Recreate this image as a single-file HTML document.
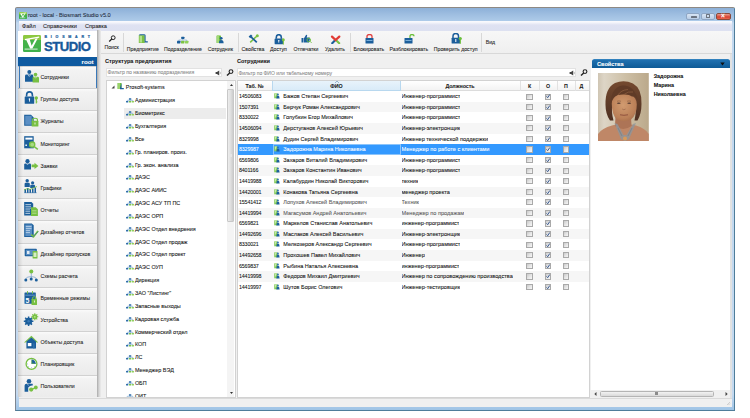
<!DOCTYPE html><html><head><meta charset="utf-8"><style>
*{box-sizing:border-box;margin:0;padding:0}
html,body{width:750px;height:418px;overflow:hidden;background:#fff;font-family:"Liberation Sans",sans-serif;color:#222}
.ab{position:absolute}
.t{position:absolute;white-space:nowrap;line-height:1;-webkit-text-stroke:0.07px currentColor}
</style></head><body>
<div class="ab" style="left:15px;top:7px;width:720px;height:404px;border:1px solid #7d8590;border-top-color:#8e8984;border-right-color:#4f7d9a;border-bottom-color:#4f7d9a;border-radius:2px 2px 0 0;background:linear-gradient(#8db0d8 0px,#9dbde0 6px,#aecbe9 13px,#c2d8ef 15px,#c4d9ef 100%)"></div><div class="ab" style="left:16px;top:395px;width:718px;height:15px;background:linear-gradient(#c2d8ef,#9fc4e6)"></div><div class="ab" style="left:19px;top:12px;width:8px;height:7px;background:linear-gradient(#9ad450 0,#8dc840 35%,#46b34a 36%,#3fb04c);border-radius:0.8px"></div><svg class="ab" style="left:19px;top:12px" width="8" height="7" viewBox="0 0 18 17"><path d="M1.9 4.6 Q9 3.6 16.2 2.2" stroke="#fff" stroke-width="1.6" fill="none"/><path d="M3 4.4 L7.2 13.4 L9.4 13.4 L14.8 3.3 L12.4 3.7 L8.6 10.8 L6.6 4.1Z" fill="#fff"/><path d="M1.6 14.1 H14.6" stroke="#fff" stroke-width="1.2"/></svg><div class="t" style="left:28px;top:13.1px;font-size:5.6px;color:#1e2a3a">root - local - Biosmart Studio v5.0</div><div class="ab" style="left:686px;top:12.5px;width:14px;height:7px;border:1px solid #8ea6c4;border-radius:2px;background:linear-gradient(#d8e5f4,#b9cde6)"></div><div class="ab" style="left:690.5px;top:15.5px;width:6px;height:2px;background:#f4f6fa;border:0.5px solid #6a7380;border-radius:0.5px"></div><div class="ab" style="left:701px;top:12.5px;width:14px;height:7px;border:1px solid #8ea6c4;border-radius:2px;background:linear-gradient(#d8e5f4,#b9cde6)"></div><div class="ab" style="left:705.8px;top:14.3px;width:4.5px;height:3.6px;border:1px solid #6d7580;border-radius:0.6px"></div><div class="ab" style="left:716px;top:12.5px;width:15px;height:7px;border:1px solid #8a4a3a;border-radius:2px;background:linear-gradient(#e8a090,#d84030 60%,#e86a50)"></div><div class="t" style="left:721px;top:12.5px;font-size:6.5px;font-weight:bold;color:#fff">×</div><div class="ab" style="left:19px;top:21px;width:713px;height:386px;background:#f0f0f0"></div><div class="ab" style="left:730.3px;top:30px;width:1.7px;height:377px;background:#e2e2e2"></div><div class="ab" style="left:19px;top:21px;width:713px;height:9.6px;background:linear-gradient(#fbfbfd 0,#f4f5fb 1.5px,#dfe2f2 4px,#dde1f1 100%)"></div><div class="t" style="left:22px;top:23.9px;font-size:5.6px;color:#1a1a1a">Файл</div><div class="t" style="left:43px;top:23.9px;font-size:5.6px;color:#1a1a1a">Справочники</div><div class="t" style="left:85px;top:23.9px;font-size:5.6px;color:#1a1a1a">Справка</div><div class="ab" style="left:18px;top:30.6px;width:79px;height:26.4px;background:#fff"></div><div class="ab" style="left:22.9px;top:35.4px;width:18.1px;height:17px;background:linear-gradient(#8dc840 0,#8dc840 30%,#46b34a 31%,#3fb04c 100%);border-radius:1.2px"></div><svg class="ab" style="left:22.9px;top:35.4px" width="18" height="17" viewBox="0 0 18 17"><path d="M1.9 4.6 Q9 3.6 16.2 2.2" stroke="#fff" stroke-width="1.3" fill="none"/><path d="M3 4.4 L7.2 13.4 L9.4 13.4 L14.8 3.3 L12.4 3.7 L8.6 10.8 L6.6 4.1Z" fill="#fff"/><path d="M1.6 14.1 H14.6" stroke="#fff" stroke-width="0.8"/></svg><div class="t" style="left:44.5px;top:35.9px;font-size:3.6px;font-weight:bold;color:#1b5e9b;letter-spacing:3.75px;-webkit-text-stroke:0.2px #1b5e9b">BIOSMART</div><div class="t" style="left:44px;top:40.2px;font-size:13.4px;font-weight:bold;color:#17589a;letter-spacing:-0.55px;transform:scaleX(0.985);transform-origin:0 0;-webkit-text-stroke:0.35px #17589a">STUDIO</div><div class="ab" style="left:18px;top:57px;width:79px;height:9px;background:#0f5aa0"></div><div class="t" style="left:81.6px;top:58.8px;font-size:6.2px;font-weight:bold;color:#fff">root</div><div class="ab" style="left:17.7px;top:66.00px;width:79.3px;height:22.07px;background:linear-gradient(#cfcfcf 0,#d2d2d2 0.7px,#f9f9f9 1.5px,#f3f3f3 4px,#ebebeb 100%)"></div><div class="t" style="left:40.5px;top:75.30px;font-size:5.25px;color:#1a1a1a">Сотрудники</div><div class="ab" style="left:17.7px;top:88.07px;width:79.3px;height:22.07px;background:linear-gradient(#cfcfcf 0,#d2d2d2 0.7px,#f9f9f9 1.5px,#f3f3f3 4px,#ebebeb 100%)"></div><div class="t" style="left:40.5px;top:97.37px;font-size:5.25px;color:#1a1a1a">Группы доступа</div><div class="ab" style="left:17.7px;top:110.14px;width:79.3px;height:22.07px;background:linear-gradient(#cfcfcf 0,#d2d2d2 0.7px,#f9f9f9 1.5px,#f3f3f3 4px,#ebebeb 100%)"></div><div class="t" style="left:40.5px;top:119.44px;font-size:5.25px;color:#1a1a1a">Журналы</div><div class="ab" style="left:17.7px;top:132.21px;width:79.3px;height:22.07px;background:linear-gradient(#cfcfcf 0,#d2d2d2 0.7px,#f9f9f9 1.5px,#f3f3f3 4px,#ebebeb 100%)"></div><div class="t" style="left:40.5px;top:141.51px;font-size:5.25px;color:#1a1a1a">Мониторинг</div><div class="ab" style="left:17.7px;top:154.28px;width:79.3px;height:22.07px;background:linear-gradient(#cfcfcf 0,#d2d2d2 0.7px,#f9f9f9 1.5px,#f3f3f3 4px,#ebebeb 100%)"></div><div class="t" style="left:40.5px;top:163.58px;font-size:5.25px;color:#1a1a1a">Заявки</div><div class="ab" style="left:17.7px;top:176.35px;width:79.3px;height:22.07px;background:linear-gradient(#cfcfcf 0,#d2d2d2 0.7px,#f9f9f9 1.5px,#f3f3f3 4px,#ebebeb 100%)"></div><div class="t" style="left:40.5px;top:185.65px;font-size:5.25px;color:#1a1a1a">Графики</div><div class="ab" style="left:17.7px;top:198.42px;width:79.3px;height:22.07px;background:linear-gradient(#cfcfcf 0,#d2d2d2 0.7px,#f9f9f9 1.5px,#f3f3f3 4px,#ebebeb 100%)"></div><div class="t" style="left:40.5px;top:207.72px;font-size:5.25px;color:#1a1a1a">Отчеты</div><div class="ab" style="left:17.7px;top:220.49px;width:79.3px;height:22.07px;background:linear-gradient(#cfcfcf 0,#d2d2d2 0.7px,#f9f9f9 1.5px,#f3f3f3 4px,#ebebeb 100%)"></div><div class="t" style="left:40.5px;top:229.79px;font-size:5.25px;color:#1a1a1a">Дизайнер отчетов</div><div class="ab" style="left:17.7px;top:242.56px;width:79.3px;height:22.07px;background:linear-gradient(#cfcfcf 0,#d2d2d2 0.7px,#f9f9f9 1.5px,#f3f3f3 4px,#ebebeb 100%)"></div><div class="t" style="left:40.5px;top:251.86px;font-size:5.25px;color:#1a1a1a">Дизайнер пропусков</div><div class="ab" style="left:17.7px;top:264.63px;width:79.3px;height:22.07px;background:linear-gradient(#cfcfcf 0,#d2d2d2 0.7px,#f9f9f9 1.5px,#f3f3f3 4px,#ebebeb 100%)"></div><div class="t" style="left:40.5px;top:273.93px;font-size:5.25px;color:#1a1a1a">Схемы расчета</div><div class="ab" style="left:17.7px;top:286.70px;width:79.3px;height:22.07px;background:linear-gradient(#cfcfcf 0,#d2d2d2 0.7px,#f9f9f9 1.5px,#f3f3f3 4px,#ebebeb 100%)"></div><div class="t" style="left:40.5px;top:296.00px;font-size:5.25px;color:#1a1a1a">Временные режимы</div><div class="ab" style="left:17.7px;top:308.77px;width:79.3px;height:22.07px;background:linear-gradient(#cfcfcf 0,#d2d2d2 0.7px,#f9f9f9 1.5px,#f3f3f3 4px,#ebebeb 100%)"></div><div class="t" style="left:40.5px;top:318.07px;font-size:5.25px;color:#1a1a1a">Устройства</div><div class="ab" style="left:17.7px;top:330.84px;width:79.3px;height:22.07px;background:linear-gradient(#cfcfcf 0,#d2d2d2 0.7px,#f9f9f9 1.5px,#f3f3f3 4px,#ebebeb 100%)"></div><div class="t" style="left:40.5px;top:340.14px;font-size:5.25px;color:#1a1a1a">Объекты доступа</div><div class="ab" style="left:17.7px;top:352.91px;width:79.3px;height:22.07px;background:linear-gradient(#cfcfcf 0,#d2d2d2 0.7px,#f9f9f9 1.5px,#f3f3f3 4px,#ebebeb 100%)"></div><div class="t" style="left:40.5px;top:362.21px;font-size:5.25px;color:#1a1a1a">Планировщик</div><div class="ab" style="left:17.7px;top:374.98px;width:79.3px;height:22.07px;background:linear-gradient(#cfcfcf 0,#d2d2d2 0.7px,#f9f9f9 1.5px,#f3f3f3 4px,#ebebeb 100%)"></div><div class="t" style="left:40.5px;top:384.28px;font-size:5.25px;color:#1a1a1a">Пользователи</div><svg class="ab" style="left:20px;top:66.00px" width="22" height="22" viewBox="0 0 22 22"><circle cx="9.3" cy="5.9" r="2" fill="#1b5e9b"/><path d="M5 15.8 V10 Q5 8.6 6.5 8.6 H12 Q13.3 8.6 13.3 10 V15.8Z" fill="#1b5e9b"/><path d="M7.8 8.6 L9.3 10.4 L10.8 8.6" stroke="#fff" stroke-width="0.6" fill="none"/><circle cx="15.5" cy="8.6" r="1.8" fill="#78c043"/><path d="M12.6 16.6 V12 Q12.6 10.8 14 10.8 H17.6 Q19 10.8 19 12 V16.6Z" fill="#78c043"/><path d="M14.2 10.8 L15.5 12.2 L16.8 10.8" stroke="#fff" stroke-width="0.5" fill="none"/></svg><svg class="ab" style="left:20px;top:88.07px" width="22" height="22" viewBox="0 0 22 22"><path d="M6.6 8.6 V7 Q6.6 3.9 9.5 3.9 Q12.4 3.9 12.4 7 V8.6" stroke="#1b5e9b" stroke-width="1.6" fill="none"/><rect x="4.7" y="8.4" width="9.5" height="7.4" rx="0.6" fill="#1b5e9b"/><circle cx="9.4" cy="11" r="0.8" fill="#fff"/><rect x="9" y="11" width="0.8" height="2.6" fill="#fff"/><circle cx="16.3" cy="10" r="1.7" fill="#78c043"/><rect x="15.7" y="10" width="1.2" height="5.4" fill="#78c043"/><rect x="16.5" y="13.5" width="1" height="0.8" fill="#78c043"/></svg><svg class="ab" style="left:20px;top:110.14px" width="22" height="22" viewBox="0 0 22 22"><path d="M4.2 4.7 H11 L13.7 7.4 V15.8 H4.2Z" fill="#1b5e9b"/><rect x="5.2" y="5.8" width="6.5" height="9" fill="#5b8fc4"/><path d="M12.5 11 V10 Q12.5 8.3 15 8.3 Q17.5 8.3 17.5 10 V11" stroke="#78c043" stroke-width="1.1" fill="none"/><rect x="11.6" y="10.8" width="6.8" height="5.8" rx="0.5" fill="#78c043"/><rect x="14.6" y="12.5" width="0.8" height="2" fill="#fff"/></svg><svg class="ab" style="left:20px;top:132.21px" width="22" height="22" viewBox="0 0 22 22"><rect x="4.2" y="4.2" width="9.5" height="12.1" fill="#1b5e9b"/><rect x="5.4" y="5.6" width="7.1" height="2" fill="#fff"/><rect x="5.4" y="12.5" width="1.5" height="1.5" fill="#fff"/><circle cx="12.2" cy="12.6" r="2.6" stroke="#78c043" stroke-width="1.3" fill="#a9db82"/><path d="M14.2 14.6 L17.8 17.4" stroke="#78c043" stroke-width="1.4"/></svg><svg class="ab" style="left:20px;top:154.28px" width="22" height="22" viewBox="0 0 22 22"><circle cx="7.5" cy="7.2" r="2.1" fill="#1b5e9b"/><path d="M4.2 15.6 V10.6 Q4.2 9.4 5.4 9.4 H9.8 Q11 9.4 11 10.6 V15.6Z" fill="#1b5e9b"/><path d="M6.3 9.4 L7.5 10.8 L8.7 9.4" stroke="#fff" stroke-width="0.5" fill="none"/><path d="M11.6 10.6 H14.5 V8.7 L18.4 11.9 L14.5 15.1 V13.2 H11.6Z" fill="#78c043"/></svg><svg class="ab" style="left:20px;top:176.35px" width="22" height="22" viewBox="0 0 22 22"><circle cx="7.2" cy="4.8" r="1.7" fill="#1b5e9b"/><path d="M4.6 11 V8 Q4.6 6.8 5.8 6.8 H8.6 Q9.8 6.8 9.8 8 V11Z" fill="#1b5e9b"/><circle cx="12.6" cy="6.8" r="1.6" fill="#1b5e9b"/><path d="M10.2 12 V9.8 Q10.2 8.8 11.3 8.8 H14 Q15 8.8 15 9.8 V12Z" fill="#1b5e9b"/><rect x="4.5" y="13" width="1.5" height="3.8" fill="#1b5e9b"/><rect x="7" y="12" width="1.5" height="4.8" fill="#1b5e9b"/><rect x="9.5" y="13" width="1.5" height="3.8" fill="#1b5e9b"/><rect x="12" y="12.5" width="1.5" height="4.3" fill="#1b5e9b"/><rect x="14.5" y="11.5" width="1.5" height="5.3" fill="#1b5e9b"/><path d="M4 14 L7.5 12.5 L10 13.5 L13 12 L17 10.5" stroke="#78c043" stroke-width="0.8" fill="none"/><rect x="4.2" y="16.6" width="12.5" height="0.5" fill="#1b5e9b"/></svg><svg class="ab" style="left:20px;top:198.42px" width="22" height="22" viewBox="0 0 22 22"><path d="M4.2 4 H11.5 L13.2 5.7 V17.6 H4.2Z" fill="#1b5e9b"/><path d="M5.4 6.5 H11 M5.4 8.3 H11 M5.4 10.1 H11 M5.4 11.9 H10 M5.4 13.7 H10 M5.4 15.5 H10" stroke="#fff" stroke-width="0.6"/><path d="M11 9.2 H15.8 L17.9 11.3 V18 H11Z" fill="#78c043"/><path d="M12.2 12.5 H16.5 M12.2 14 H16.5 M12.2 15.5 H16.5" stroke="#c9eaa8" stroke-width="0.5"/></svg><svg class="ab" style="left:20px;top:220.49px" width="22" height="22" viewBox="0 0 22 22"><path d="M4.2 3.4 H11.8 L13.7 5.3 V17.1 H4.2Z" fill="#1b5e9b"/><rect x="5.3" y="4.6" width="6.8" height="11.5" fill="#5b8fc4"/><path d="M5.8 6.6 H11.5 M5.8 8.6 H11.5 M5.8 10.6 H10 M5.8 12.6 H10" stroke="#d8e6f4" stroke-width="0.7"/><path d="M11.3 14.5 L13.6 16.8 L18 11" stroke="#78c043" stroke-width="1.6" fill="none"/><path d="M12 17.5 L18.5 11.5" stroke="#1b5e9b" stroke-width="0.5"/></svg><svg class="ab" style="left:20px;top:242.56px" width="22" height="22" viewBox="0 0 22 22"><rect x="4.7" y="5.8" width="12.1" height="7.4" rx="0.7" fill="#1b5e9b"/><rect x="5.8" y="6.8" width="9.8" height="5.4" fill="#5b8fc4"/><rect x="7" y="8" width="2.5" height="3" fill="#fff" opacity="0.8"/><rect x="12.6" y="8" width="4.9" height="7.5" rx="0.5" fill="#78c043"/><rect x="13.5" y="9.5" width="3" height="4.5" fill="#fff" opacity="0.7"/></svg><svg class="ab" style="left:20px;top:264.63px" width="22" height="22" viewBox="0 0 22 22"><path d="M11.3 8 V11.5 M5.8 14.5 Q5.8 11.7 11.3 11.7 Q16.3 11.7 16.3 14.5 M11.3 11.7 V13.8" stroke="#5b8fc4" stroke-width="0.6" fill="none"/><circle cx="11.3" cy="6.4" r="2" fill="#78c043"/><circle cx="5.8" cy="14.9" r="1.5" fill="#1b5e9b"/><circle cx="11.2" cy="13.9" r="1.5" fill="#1b5e9b"/><circle cx="16.3" cy="14.9" r="1.5" fill="#1b5e9b"/></svg><svg class="ab" style="left:20px;top:286.70px" width="22" height="22" viewBox="0 0 22 22"><rect x="4.5" y="5.6" width="11.3" height="11.2" rx="0.5" fill="#1b5e9b"/><rect x="5.4" y="7.6" width="9.5" height="1.2" fill="#5b8fc4"/><path d="M7.5 4 V6.8 M12.5 4 V6.8" stroke="#78c043" stroke-width="0.9"/><text x="5.6" y="15.6" font-family="Liberation Sans" font-size="7" font-weight="bold" fill="#fff">5</text><path d="M12.5 12 V11.2 Q12.5 9.7 14.3 9.7 Q16 9.7 16 11.2 V12" stroke="#78c043" stroke-width="1" fill="none"/><rect x="11.5" y="11.8" width="5.5" height="6.3" rx="0.5" fill="#78c043"/><rect x="14" y="13.5" width="0.7" height="2" fill="#fff"/></svg><svg class="ab" style="left:20px;top:308.77px" width="22" height="22" viewBox="0 0 22 22"><circle cx="8.6" cy="12.2" r="3.5" fill="#1b5e9b"/><path d="M8.6 7.4 V17 M3.8 12.2 H13.4 M5.2 8.8 L12 15.6 M12 8.8 L5.2 15.6" stroke="#1b5e9b" stroke-width="1.5"/><circle cx="8.6" cy="12.2" r="1.2" fill="#3a7ab8"/><circle cx="14.8" cy="7.8" r="2.5" fill="#78c043"/><path d="M14.8 4.3 V11.3 M11.3 7.8 H18.3 M12.3 5.3 L17.3 10.3 M17.3 5.3 L12.3 10.3" stroke="#78c043" stroke-width="1.1"/><circle cx="14.8" cy="7.8" r="0.9" fill="#b8e492"/></svg><svg class="ab" style="left:20px;top:330.84px" width="22" height="22" viewBox="0 0 22 22"><path d="M4 11.6 L11.4 4.8 L18.2 11.6 L16.6 11.6 L11.4 6.8 L5.6 11.6Z" fill="#78c043"/><path d="M6.4 10.4 L11.4 6.4 L16 10.4 V17.4 H6.4Z" fill="#1b5e9b"/><rect x="7.8" y="12" width="3.6" height="3.2" fill="#fff"/><rect x="13" y="12.3" width="1.6" height="5.1" fill="#2f6faa"/></svg><svg class="ab" style="left:20px;top:352.91px" width="22" height="22" viewBox="0 0 22 22"><circle cx="11.5" cy="10.9" r="5.4" stroke="#78c043" stroke-width="1.3" fill="#fff"/><path d="M11.5 6.6 V10.9 H15.8 A4.3 4.3 0 0 0 11.5 6.6Z" fill="#1b5e9b"/><path d="M11.7 7.4 V10.4 H14.8" stroke="#78c043" stroke-width="0.6" fill="none"/><circle cx="7.7" cy="10.9" r="0.4" fill="#1b5e9b"/><circle cx="11.5" cy="14.8" r="0.4" fill="#1b5e9b"/><circle cx="8.7" cy="13.8" r="0.4" fill="#1b5e9b"/><circle cx="14.3" cy="13.8" r="0.4" fill="#1b5e9b"/></svg><svg class="ab" style="left:20px;top:374.98px" width="22" height="22" viewBox="0 0 22 22"><circle cx="9" cy="6.2" r="2.3" fill="#1b5e9b"/><path d="M4.6 16.8 V10.6 Q4.6 8.8 6.6 8.8 H12.5 L13 10.2 L10 11 L8.2 12.5 V16.8Z" fill="#1b5e9b"/><path d="M7.6 9 L8.4 10.6" stroke="#fff" stroke-width="0.5"/><circle cx="11.2" cy="14.6" r="2.1" fill="#78c043"/><circle cx="15.8" cy="12.5" r="1.9" fill="#78c043"/><path d="M11.2 14.6 L15.8 12.5" stroke="#78c043" stroke-width="1.3"/></svg><div class="ab" style="left:17.7px;top:66px;width:5px;height:331px;background:linear-gradient(90deg,rgba(0,0,0,0.13),rgba(0,0,0,0.04) 60%,rgba(0,0,0,0))"></div><div class="ab" style="left:18.5px;top:66px;width:78.5px;height:22px;border-left:1.5px solid #3a78b8;border-right:1.5px solid #3a78b8"></div><div class="ab" style="left:96.8px;top:30px;width:4.5px;height:367px;background:linear-gradient(90deg,#a9a9a9,#c9c9c9 35%,#e2e2e2 75%,#eaeaea)"></div><div class="ab" style="left:101px;top:30.6px;width:631px;height:23.2px;background:linear-gradient(#f7f7f7,#efefef);border-bottom:1px solid #d8d8d8"></div><div class="t" style="left:111.7px;top:44.5px;font-size:5.2px;color:#1a1a1a;transform:translateX(-50%)">Поиск</div><div class="t" style="left:142.8px;top:46.5px;font-size:5.2px;color:#1a1a1a;transform:translateX(-50%)">Предприятие</div><div class="t" style="left:183px;top:46.5px;font-size:5.2px;color:#1a1a1a;transform:translateX(-50%)">Подразделение</div><div class="t" style="left:220.3px;top:46.5px;font-size:5.2px;color:#1a1a1a;transform:translateX(-50%)">Сотрудник</div><div class="t" style="left:253px;top:46.5px;font-size:5.2px;color:#1a1a1a;transform:translateX(-50%)">Свойства</div><div class="t" style="left:278.4px;top:46.5px;font-size:5.2px;color:#1a1a1a;transform:translateX(-50%)">Доступ</div><div class="t" style="left:306px;top:46.5px;font-size:5.2px;color:#1a1a1a;transform:translateX(-50%)">Отпечатки</div><div class="t" style="left:335px;top:46.5px;font-size:5.2px;color:#1a1a1a;transform:translateX(-50%)">Удалить</div><div class="t" style="left:368.9px;top:46.5px;font-size:5.2px;color:#1a1a1a;transform:translateX(-50%)">Блокировать</div><div class="t" style="left:408.9px;top:46.5px;font-size:5.2px;color:#1a1a1a;transform:translateX(-50%)">Разблокировать</div><div class="t" style="left:455.7px;top:46.5px;font-size:5.2px;color:#1a1a1a;transform:translateX(-50%)">Проверить доступ</div><div class="ab" style="left:123px;top:33px;width:0.8px;height:19px;background:#d8d8d8"></div><div class="ab" style="left:237.6px;top:33px;width:0.8px;height:19px;background:#d8d8d8"></div><div class="ab" style="left:349.7px;top:33px;width:0.8px;height:19px;background:#d8d8d8"></div><div class="ab" style="left:481.4px;top:33px;width:0.8px;height:19px;background:#d8d8d8"></div><svg class="ab" style="left:107.5px;top:34.5px" width="8" height="7" viewBox="0 0 8 7"><circle cx="5.2" cy="2.7" r="1.9" stroke="#222" stroke-width="1.0" fill="none"/><path d="M3.8 4.1 L1.2 6.5" stroke="#222" stroke-width="1.3"/></svg><svg class="ab" style="left:137.5px;top:34px" width="11" height="9.5" viewBox="0 0 11 9.5"><rect x="0.8" y="1.2" width="6" height="7.8" fill="#7cc243"/><rect x="1.6" y="2" width="2.4" height="6.5" fill="#b3e08c"/><path d="M0.8 1.2 Q1 0.2 2.5 0.2 H6 Q7.6 0.2 7.6 1.6 V7.2 H9.8 V8.6 H6.6 V1.2Z" fill="#1b5e9b"/></svg><svg class="ab" style="left:177.3px;top:35.5px" width="11.5" height="8" viewBox="0 0 11.5 8"><rect x="4.2" y="0.8" width="3.2" height="2.2" rx="0.4" fill="#1b5e9b"/><rect x="0" y="4.8" width="3.4" height="2.6" rx="0.4" fill="#1b5e9b"/><rect x="4" y="4.8" width="3.4" height="2.6" rx="0.4" fill="#7cc243"/><rect x="8" y="4.8" width="3.4" height="2.6" rx="0.4" fill="#8fd05a"/><path d="M1.7 4.8 V4 H9.7 V4.8 M5.8 3 V4" stroke="#5a90c4" stroke-width="0.5" fill="none"/></svg><svg class="ab" style="left:216px;top:34.5px" width="8" height="9" viewBox="0 0 8 9"><rect x="0.5" y="0.5" width="4.5" height="7.5" fill="#6cbf3c" rx="0.6"/><rect x="1" y="0.5" width="2" height="7.5" fill="#a3d977"/><circle cx="5.2" cy="3.3" r="1.4" fill="#1b5e9b"/><path d="M3 8.3 Q3 5 5.2 5 Q7.6 5 7.6 8.3Z" fill="#1b5e9b"/></svg><svg class="ab" style="left:247.5px;top:34px" width="11" height="9" viewBox="0 0 11 9"><path d="M9.8 1.2 L2.2 8.4" stroke="#7cc243" stroke-width="1.5"/><circle cx="9.3" cy="1.7" r="1.5" fill="#7cc243"/><path d="M0.6 2.6 L3 0.4 L4.6 2 L2.2 4.2Z" fill="#1b5e9b"/><path d="M3 2.8 L8.8 8.4" stroke="#1b5e9b" stroke-width="1.7"/></svg><svg class="ab" style="left:273.5px;top:33.5px" width="11" height="11" viewBox="0 0 11 11"><path d="M2.3 4.8 V3.2 Q2.3 0.7 4.8 0.7 Q7.3 0.7 7.3 3.2 V4.8" stroke="#1b5e9b" stroke-width="1.6" fill="none"/><rect x="0.6" y="4.5" width="8.4" height="5.8" fill="#1b5e9b" rx="0.9"/><circle cx="9.3" cy="5.8" r="1.5" fill="#7cc243"/><rect x="8.8" y="5.8" width="1.1" height="4.8" fill="#7cc243"/><circle cx="4.8" cy="6.6" r="0.7" fill="#fff"/><rect x="4.4" y="6.6" width="0.8" height="2" fill="#fff"/></svg><svg class="ab" style="left:300.5px;top:34px" width="11" height="9" viewBox="0 0 11 9"><path d="M0.5 4 H2.5 V8.5 H0.5Z" fill="#1b5e9b"/><path d="M3 4.2 L5 1 Q6 0.2 6.2 1.5 L5.6 3.6 H8.5 Q9.3 3.8 9 4.8 L8 8.5 H3Z" fill="#1b5e9b"/><circle cx="7.8" cy="6" r="1.8" stroke="#6cbf3c" stroke-width="0.9" fill="none"/><path d="M9 7.3 L10.5 8.8" stroke="#6cbf3c" stroke-width="1"/></svg><svg class="ab" style="left:329.5px;top:34px" width="11" height="10" viewBox="0 0 11 10"><path d="M5.6 5.8 L2.2 9.2" stroke="#1b5e9b" stroke-width="2.1" stroke-linecap="round"/><path d="M5.6 5.8 L9.2 9.2" stroke="#7cc243" stroke-width="2.1" stroke-linecap="round"/><path d="M2 2.6 L5.6 6 L9.3 2.6" stroke="#e23b35" stroke-width="2.3" stroke-linecap="round" fill="none"/></svg><svg class="ab" style="left:364.5px;top:33.5px" width="9" height="10" viewBox="0 0 9 10"><path d="M2 4 V2.2 Q2 0.5 4.5 0.5 Q7 0.5 7 2.2 V4" stroke="#e04040" stroke-width="1.3" fill="none"/><rect x="0.5" y="4" width="8" height="5.5" fill="#1b5e9b" rx="0.5"/><rect x="1.5" y="6" width="6" height="0.8" fill="#8ec0e8"/></svg><svg class="ab" style="left:404px;top:33.5px" width="11" height="10" viewBox="0 0 11 10"><path d="M6 4 V2.2 Q6 0.5 8 0.5 Q10 0.5 10 2.2" stroke="#6cbf3c" stroke-width="1.3" fill="none"/><rect x="0.5" y="4" width="8" height="5.5" fill="#1b5e9b" rx="0.5"/><rect x="1.5" y="6" width="6" height="0.8" fill="#8ec0e8"/></svg><svg class="ab" style="left:450.5px;top:33px" width="11" height="11" viewBox="0 0 11 11"><path d="M2 5 V3 Q2 0.5 4.8 0.5 Q7.5 0.5 7.5 3 V5" stroke="#1b5e9b" stroke-width="1.5" fill="none"/><rect x="0.6" y="4.8" width="8.4" height="5.6" fill="#1b5e9b" rx="0.5"/><circle cx="9.3" cy="5.5" r="1.6" fill="#6cbf3c"/><rect x="8.7" y="5.5" width="1.2" height="5.3" fill="#6cbf3c"/><rect x="4.3" y="6" width="1" height="3" fill="#fff"/></svg><div class="t" style="left:485.7px;top:40.3px;font-size:5.2px;color:#1a1a1a">Вид</div><div class="t" style="left:105px;top:59.3px;font-size:5.6px;font-weight:bold;color:#1a1a1a">Структура предприятия</div><div class="ab" style="left:106px;top:68px;width:116px;height:8.5px;background:#fff;border:1px solid #e2e2e2"></div><div class="t" style="left:107.5px;top:70.4px;font-size:5.15px;color:#8a8a8a">Фильтр по названию подразделения</div><svg class="ab" style="left:215px;top:69.5px" width="7" height="6" viewBox="0 0 7 6"><path d="M0.6 2.1 H1.9 L4.2 0.4 V5.6 L1.9 3.9 H0.6Z" fill="#444"/><path d="M5 1.8 Q5.9 3 5 4.2" stroke="#777" stroke-width="0.5" fill="none"/></svg><svg class="ab" style="left:226px;top:69px" width="8" height="7" viewBox="0 0 8 7"><circle cx="5" cy="2.6" r="1.9" stroke="#222" stroke-width="1.1" fill="none"/><path d="M3.7 3.9 L1 6.4" stroke="#222" stroke-width="1.4"/></svg><div class="ab" style="left:105.5px;top:80px;width:130px;height:317.5px;background:#fff;border:1px solid #d2d2d2"></div><div class="ab" style="left:227.2px;top:81px;width:7.3px;height:315.5px;background:#f4f4f4"></div><div class="ab" style="left:227.4px;top:88.9px;width:7px;height:133.3px;background:linear-gradient(90deg,#ededed,#e0e0e0 50%,#cdcdcd);border:0.6px solid #c8c8c8;border-radius:1px"></div><div class="ab" style="left:229.3px;top:154px;width:3px;height:3.2px;background:repeating-linear-gradient(#9a9a9a 0 0.5px,#e6e6e6 0.5px 1px)"></div><svg class="ab" style="left:229.5px;top:83.5px" width="3" height="2" viewBox="0 0 3 2"><path d="M0 2 L1.5 0 L3 2Z" fill="#333"/></svg><svg class="ab" style="left:229.5px;top:392px" width="3" height="2" viewBox="0 0 3 2"><path d="M0 0 L1.5 2 L3 0Z" fill="#333"/></svg><div class="ab" style="left:106.5px;top:81px;width:121px;height:316px;overflow:hidden"><div class="ab" style="left:17.8px;top:26.50px;width:101.5px;height:11.8px;background:#ececec"></div><svg class="ab" style="left:4px;top:4.40px" width="4" height="4" viewBox="0 0 4 4"><path d="M3.5 0.5 V3.5 H0.5Z" fill="#444"/></svg><svg class="ab" style="left:10.5px;top:1.90px" width="7" height="7" viewBox="0 0 7 7"><rect x="0.5" y="0" width="4" height="6" fill="#6cbf3c"/><rect x="1" y="0" width="2" height="6" fill="#9ad36a"/><path d="M4.5 0 V5 H6.8 V6.3 H3 V5 Z" fill="#1b5e9b"/></svg><div class="t" style="left:19.3px;top:3.80px;font-size:5.45px;color:#111">Prosoft-systems</div><svg class="ab" style="left:19.0px;top:17.25px" width="8" height="5" viewBox="0 0 8 5"><rect x="2.9" y="0.2" width="2.4" height="1.5" rx="0.3" fill="#2a6aa8"/><rect x="0" y="2.9" width="2.3" height="1.5" rx="0.3" fill="#2a6aa8"/><rect x="2.9" y="2.9" width="2.3" height="1.5" rx="0.3" fill="#7cc54a"/><rect x="5.7" y="2.9" width="2.3" height="1.5" rx="0.3" fill="#8fd060"/><path d="M1.1 2.9 V2.3 H6.9 V2.9 M4.1 1.7 V2.9" stroke="#4a86c0" stroke-width="0.45" fill="none"/></svg><div class="t" style="left:28.4px;top:17.25px;font-size:5.45px;color:#111">Администрация</div><svg class="ab" style="left:19.0px;top:30.10px" width="8" height="5" viewBox="0 0 8 5"><rect x="2.9" y="0.2" width="2.4" height="1.5" rx="0.3" fill="#2a6aa8"/><rect x="0" y="2.9" width="2.3" height="1.5" rx="0.3" fill="#2a6aa8"/><rect x="2.9" y="2.9" width="2.3" height="1.5" rx="0.3" fill="#7cc54a"/><rect x="5.7" y="2.9" width="2.3" height="1.5" rx="0.3" fill="#8fd060"/><path d="M1.1 2.9 V2.3 H6.9 V2.9 M4.1 1.7 V2.9" stroke="#4a86c0" stroke-width="0.45" fill="none"/></svg><div class="t" style="left:28.4px;top:30.10px;font-size:5.45px;color:#111">Биометрикс</div><svg class="ab" style="left:19.0px;top:42.95px" width="8" height="5" viewBox="0 0 8 5"><rect x="2.9" y="0.2" width="2.4" height="1.5" rx="0.3" fill="#2a6aa8"/><rect x="0" y="2.9" width="2.3" height="1.5" rx="0.3" fill="#2a6aa8"/><rect x="2.9" y="2.9" width="2.3" height="1.5" rx="0.3" fill="#7cc54a"/><rect x="5.7" y="2.9" width="2.3" height="1.5" rx="0.3" fill="#8fd060"/><path d="M1.1 2.9 V2.3 H6.9 V2.9 M4.1 1.7 V2.9" stroke="#4a86c0" stroke-width="0.45" fill="none"/></svg><div class="t" style="left:28.4px;top:42.95px;font-size:5.45px;color:#111">Бухгалтерия</div><svg class="ab" style="left:19.0px;top:55.80px" width="8" height="5" viewBox="0 0 8 5"><rect x="2.9" y="0.2" width="2.4" height="1.5" rx="0.3" fill="#2a6aa8"/><rect x="0" y="2.9" width="2.3" height="1.5" rx="0.3" fill="#2a6aa8"/><rect x="2.9" y="2.9" width="2.3" height="1.5" rx="0.3" fill="#7cc54a"/><rect x="5.7" y="2.9" width="2.3" height="1.5" rx="0.3" fill="#8fd060"/><path d="M1.1 2.9 V2.3 H6.9 V2.9 M4.1 1.7 V2.9" stroke="#4a86c0" stroke-width="0.45" fill="none"/></svg><div class="t" style="left:28.4px;top:55.80px;font-size:5.45px;color:#111">Все</div><svg class="ab" style="left:19.0px;top:68.65px" width="8" height="5" viewBox="0 0 8 5"><rect x="2.9" y="0.2" width="2.4" height="1.5" rx="0.3" fill="#2a6aa8"/><rect x="0" y="2.9" width="2.3" height="1.5" rx="0.3" fill="#2a6aa8"/><rect x="2.9" y="2.9" width="2.3" height="1.5" rx="0.3" fill="#7cc54a"/><rect x="5.7" y="2.9" width="2.3" height="1.5" rx="0.3" fill="#8fd060"/><path d="M1.1 2.9 V2.3 H6.9 V2.9 M4.1 1.7 V2.9" stroke="#4a86c0" stroke-width="0.45" fill="none"/></svg><div class="t" style="left:28.4px;top:68.65px;font-size:5.45px;color:#111">Гр. планиров. произ.</div><svg class="ab" style="left:19.0px;top:81.50px" width="8" height="5" viewBox="0 0 8 5"><rect x="2.9" y="0.2" width="2.4" height="1.5" rx="0.3" fill="#2a6aa8"/><rect x="0" y="2.9" width="2.3" height="1.5" rx="0.3" fill="#2a6aa8"/><rect x="2.9" y="2.9" width="2.3" height="1.5" rx="0.3" fill="#7cc54a"/><rect x="5.7" y="2.9" width="2.3" height="1.5" rx="0.3" fill="#8fd060"/><path d="M1.1 2.9 V2.3 H6.9 V2.9 M4.1 1.7 V2.9" stroke="#4a86c0" stroke-width="0.45" fill="none"/></svg><div class="t" style="left:28.4px;top:81.50px;font-size:5.45px;color:#111">Гр. экон. анализа</div><svg class="ab" style="left:19.0px;top:94.35px" width="8" height="5" viewBox="0 0 8 5"><rect x="2.9" y="0.2" width="2.4" height="1.5" rx="0.3" fill="#2a6aa8"/><rect x="0" y="2.9" width="2.3" height="1.5" rx="0.3" fill="#2a6aa8"/><rect x="2.9" y="2.9" width="2.3" height="1.5" rx="0.3" fill="#7cc54a"/><rect x="5.7" y="2.9" width="2.3" height="1.5" rx="0.3" fill="#8fd060"/><path d="M1.1 2.9 V2.3 H6.9 V2.9 M4.1 1.7 V2.9" stroke="#4a86c0" stroke-width="0.45" fill="none"/></svg><div class="t" style="left:28.4px;top:94.35px;font-size:5.45px;color:#111">ДАЭС</div><svg class="ab" style="left:19.0px;top:107.20px" width="8" height="5" viewBox="0 0 8 5"><rect x="2.9" y="0.2" width="2.4" height="1.5" rx="0.3" fill="#2a6aa8"/><rect x="0" y="2.9" width="2.3" height="1.5" rx="0.3" fill="#2a6aa8"/><rect x="2.9" y="2.9" width="2.3" height="1.5" rx="0.3" fill="#7cc54a"/><rect x="5.7" y="2.9" width="2.3" height="1.5" rx="0.3" fill="#8fd060"/><path d="M1.1 2.9 V2.3 H6.9 V2.9 M4.1 1.7 V2.9" stroke="#4a86c0" stroke-width="0.45" fill="none"/></svg><div class="t" style="left:28.4px;top:107.20px;font-size:5.45px;color:#111">ДАЭС АИИС</div><svg class="ab" style="left:19.0px;top:120.05px" width="8" height="5" viewBox="0 0 8 5"><rect x="2.9" y="0.2" width="2.4" height="1.5" rx="0.3" fill="#2a6aa8"/><rect x="0" y="2.9" width="2.3" height="1.5" rx="0.3" fill="#2a6aa8"/><rect x="2.9" y="2.9" width="2.3" height="1.5" rx="0.3" fill="#7cc54a"/><rect x="5.7" y="2.9" width="2.3" height="1.5" rx="0.3" fill="#8fd060"/><path d="M1.1 2.9 V2.3 H6.9 V2.9 M4.1 1.7 V2.9" stroke="#4a86c0" stroke-width="0.45" fill="none"/></svg><div class="t" style="left:28.4px;top:120.05px;font-size:5.45px;color:#111">ДАЭС АСУ ТП ПС</div><svg class="ab" style="left:19.0px;top:132.90px" width="8" height="5" viewBox="0 0 8 5"><rect x="2.9" y="0.2" width="2.4" height="1.5" rx="0.3" fill="#2a6aa8"/><rect x="0" y="2.9" width="2.3" height="1.5" rx="0.3" fill="#2a6aa8"/><rect x="2.9" y="2.9" width="2.3" height="1.5" rx="0.3" fill="#7cc54a"/><rect x="5.7" y="2.9" width="2.3" height="1.5" rx="0.3" fill="#8fd060"/><path d="M1.1 2.9 V2.3 H6.9 V2.9 M4.1 1.7 V2.9" stroke="#4a86c0" stroke-width="0.45" fill="none"/></svg><div class="t" style="left:28.4px;top:132.90px;font-size:5.45px;color:#111">ДАЭС ОРП</div><svg class="ab" style="left:19.0px;top:145.75px" width="8" height="5" viewBox="0 0 8 5"><rect x="2.9" y="0.2" width="2.4" height="1.5" rx="0.3" fill="#2a6aa8"/><rect x="0" y="2.9" width="2.3" height="1.5" rx="0.3" fill="#2a6aa8"/><rect x="2.9" y="2.9" width="2.3" height="1.5" rx="0.3" fill="#7cc54a"/><rect x="5.7" y="2.9" width="2.3" height="1.5" rx="0.3" fill="#8fd060"/><path d="M1.1 2.9 V2.3 H6.9 V2.9 M4.1 1.7 V2.9" stroke="#4a86c0" stroke-width="0.45" fill="none"/></svg><div class="t" style="left:28.4px;top:145.75px;font-size:5.45px;color:#111">ДАЭС Отдел внедрения</div><svg class="ab" style="left:19.0px;top:158.60px" width="8" height="5" viewBox="0 0 8 5"><rect x="2.9" y="0.2" width="2.4" height="1.5" rx="0.3" fill="#2a6aa8"/><rect x="0" y="2.9" width="2.3" height="1.5" rx="0.3" fill="#2a6aa8"/><rect x="2.9" y="2.9" width="2.3" height="1.5" rx="0.3" fill="#7cc54a"/><rect x="5.7" y="2.9" width="2.3" height="1.5" rx="0.3" fill="#8fd060"/><path d="M1.1 2.9 V2.3 H6.9 V2.9 M4.1 1.7 V2.9" stroke="#4a86c0" stroke-width="0.45" fill="none"/></svg><div class="t" style="left:28.4px;top:158.60px;font-size:5.45px;color:#111">ДАЭС Отдел продаж</div><svg class="ab" style="left:19.0px;top:171.45px" width="8" height="5" viewBox="0 0 8 5"><rect x="2.9" y="0.2" width="2.4" height="1.5" rx="0.3" fill="#2a6aa8"/><rect x="0" y="2.9" width="2.3" height="1.5" rx="0.3" fill="#2a6aa8"/><rect x="2.9" y="2.9" width="2.3" height="1.5" rx="0.3" fill="#7cc54a"/><rect x="5.7" y="2.9" width="2.3" height="1.5" rx="0.3" fill="#8fd060"/><path d="M1.1 2.9 V2.3 H6.9 V2.9 M4.1 1.7 V2.9" stroke="#4a86c0" stroke-width="0.45" fill="none"/></svg><div class="t" style="left:28.4px;top:171.45px;font-size:5.45px;color:#111">ДАЭС Отдел проект</div><svg class="ab" style="left:19.0px;top:184.30px" width="8" height="5" viewBox="0 0 8 5"><rect x="2.9" y="0.2" width="2.4" height="1.5" rx="0.3" fill="#2a6aa8"/><rect x="0" y="2.9" width="2.3" height="1.5" rx="0.3" fill="#2a6aa8"/><rect x="2.9" y="2.9" width="2.3" height="1.5" rx="0.3" fill="#7cc54a"/><rect x="5.7" y="2.9" width="2.3" height="1.5" rx="0.3" fill="#8fd060"/><path d="M1.1 2.9 V2.3 H6.9 V2.9 M4.1 1.7 V2.9" stroke="#4a86c0" stroke-width="0.45" fill="none"/></svg><div class="t" style="left:28.4px;top:184.30px;font-size:5.45px;color:#111">ДАЭС ОУП</div><svg class="ab" style="left:19.0px;top:197.15px" width="8" height="5" viewBox="0 0 8 5"><rect x="2.9" y="0.2" width="2.4" height="1.5" rx="0.3" fill="#2a6aa8"/><rect x="0" y="2.9" width="2.3" height="1.5" rx="0.3" fill="#2a6aa8"/><rect x="2.9" y="2.9" width="2.3" height="1.5" rx="0.3" fill="#7cc54a"/><rect x="5.7" y="2.9" width="2.3" height="1.5" rx="0.3" fill="#8fd060"/><path d="M1.1 2.9 V2.3 H6.9 V2.9 M4.1 1.7 V2.9" stroke="#4a86c0" stroke-width="0.45" fill="none"/></svg><div class="t" style="left:28.4px;top:197.15px;font-size:5.45px;color:#111">Дирекция</div><svg class="ab" style="left:19.0px;top:210.00px" width="8" height="5" viewBox="0 0 8 5"><rect x="2.9" y="0.2" width="2.4" height="1.5" rx="0.3" fill="#2a6aa8"/><rect x="0" y="2.9" width="2.3" height="1.5" rx="0.3" fill="#2a6aa8"/><rect x="2.9" y="2.9" width="2.3" height="1.5" rx="0.3" fill="#7cc54a"/><rect x="5.7" y="2.9" width="2.3" height="1.5" rx="0.3" fill="#8fd060"/><path d="M1.1 2.9 V2.3 H6.9 V2.9 M4.1 1.7 V2.9" stroke="#4a86c0" stroke-width="0.45" fill="none"/></svg><div class="t" style="left:28.4px;top:210.00px;font-size:5.45px;color:#111">ЗАО &quot;Листинг&quot;</div><svg class="ab" style="left:19.0px;top:222.85px" width="8" height="5" viewBox="0 0 8 5"><rect x="2.9" y="0.2" width="2.4" height="1.5" rx="0.3" fill="#2a6aa8"/><rect x="0" y="2.9" width="2.3" height="1.5" rx="0.3" fill="#2a6aa8"/><rect x="2.9" y="2.9" width="2.3" height="1.5" rx="0.3" fill="#7cc54a"/><rect x="5.7" y="2.9" width="2.3" height="1.5" rx="0.3" fill="#8fd060"/><path d="M1.1 2.9 V2.3 H6.9 V2.9 M4.1 1.7 V2.9" stroke="#4a86c0" stroke-width="0.45" fill="none"/></svg><div class="t" style="left:28.4px;top:222.85px;font-size:5.45px;color:#111">Запасные выходы</div><svg class="ab" style="left:19.0px;top:235.70px" width="8" height="5" viewBox="0 0 8 5"><rect x="2.9" y="0.2" width="2.4" height="1.5" rx="0.3" fill="#2a6aa8"/><rect x="0" y="2.9" width="2.3" height="1.5" rx="0.3" fill="#2a6aa8"/><rect x="2.9" y="2.9" width="2.3" height="1.5" rx="0.3" fill="#7cc54a"/><rect x="5.7" y="2.9" width="2.3" height="1.5" rx="0.3" fill="#8fd060"/><path d="M1.1 2.9 V2.3 H6.9 V2.9 M4.1 1.7 V2.9" stroke="#4a86c0" stroke-width="0.45" fill="none"/></svg><div class="t" style="left:28.4px;top:235.70px;font-size:5.45px;color:#111">Кадровая служба</div><svg class="ab" style="left:19.0px;top:248.55px" width="8" height="5" viewBox="0 0 8 5"><rect x="2.9" y="0.2" width="2.4" height="1.5" rx="0.3" fill="#2a6aa8"/><rect x="0" y="2.9" width="2.3" height="1.5" rx="0.3" fill="#2a6aa8"/><rect x="2.9" y="2.9" width="2.3" height="1.5" rx="0.3" fill="#7cc54a"/><rect x="5.7" y="2.9" width="2.3" height="1.5" rx="0.3" fill="#8fd060"/><path d="M1.1 2.9 V2.3 H6.9 V2.9 M4.1 1.7 V2.9" stroke="#4a86c0" stroke-width="0.45" fill="none"/></svg><div class="t" style="left:28.4px;top:248.55px;font-size:5.45px;color:#111">Коммерческий отдел</div><svg class="ab" style="left:19.0px;top:261.40px" width="8" height="5" viewBox="0 0 8 5"><rect x="2.9" y="0.2" width="2.4" height="1.5" rx="0.3" fill="#2a6aa8"/><rect x="0" y="2.9" width="2.3" height="1.5" rx="0.3" fill="#2a6aa8"/><rect x="2.9" y="2.9" width="2.3" height="1.5" rx="0.3" fill="#7cc54a"/><rect x="5.7" y="2.9" width="2.3" height="1.5" rx="0.3" fill="#8fd060"/><path d="M1.1 2.9 V2.3 H6.9 V2.9 M4.1 1.7 V2.9" stroke="#4a86c0" stroke-width="0.45" fill="none"/></svg><div class="t" style="left:28.4px;top:261.40px;font-size:5.45px;color:#111">КОП</div><svg class="ab" style="left:19.0px;top:274.25px" width="8" height="5" viewBox="0 0 8 5"><rect x="2.9" y="0.2" width="2.4" height="1.5" rx="0.3" fill="#2a6aa8"/><rect x="0" y="2.9" width="2.3" height="1.5" rx="0.3" fill="#2a6aa8"/><rect x="2.9" y="2.9" width="2.3" height="1.5" rx="0.3" fill="#7cc54a"/><rect x="5.7" y="2.9" width="2.3" height="1.5" rx="0.3" fill="#8fd060"/><path d="M1.1 2.9 V2.3 H6.9 V2.9 M4.1 1.7 V2.9" stroke="#4a86c0" stroke-width="0.45" fill="none"/></svg><div class="t" style="left:28.4px;top:274.25px;font-size:5.45px;color:#111">ЛС</div><svg class="ab" style="left:19.0px;top:287.10px" width="8" height="5" viewBox="0 0 8 5"><rect x="2.9" y="0.2" width="2.4" height="1.5" rx="0.3" fill="#2a6aa8"/><rect x="0" y="2.9" width="2.3" height="1.5" rx="0.3" fill="#2a6aa8"/><rect x="2.9" y="2.9" width="2.3" height="1.5" rx="0.3" fill="#7cc54a"/><rect x="5.7" y="2.9" width="2.3" height="1.5" rx="0.3" fill="#8fd060"/><path d="M1.1 2.9 V2.3 H6.9 V2.9 M4.1 1.7 V2.9" stroke="#4a86c0" stroke-width="0.45" fill="none"/></svg><div class="t" style="left:28.4px;top:287.10px;font-size:5.45px;color:#111">Менеджер ВЭД</div><svg class="ab" style="left:19.0px;top:299.95px" width="8" height="5" viewBox="0 0 8 5"><rect x="2.9" y="0.2" width="2.4" height="1.5" rx="0.3" fill="#2a6aa8"/><rect x="0" y="2.9" width="2.3" height="1.5" rx="0.3" fill="#2a6aa8"/><rect x="2.9" y="2.9" width="2.3" height="1.5" rx="0.3" fill="#7cc54a"/><rect x="5.7" y="2.9" width="2.3" height="1.5" rx="0.3" fill="#8fd060"/><path d="M1.1 2.9 V2.3 H6.9 V2.9 M4.1 1.7 V2.9" stroke="#4a86c0" stroke-width="0.45" fill="none"/></svg><div class="t" style="left:28.4px;top:299.95px;font-size:5.45px;color:#111">ОБП</div><svg class="ab" style="left:19.0px;top:312.80px" width="8" height="5" viewBox="0 0 8 5"><rect x="2.9" y="0.2" width="2.4" height="1.5" rx="0.3" fill="#2a6aa8"/><rect x="0" y="2.9" width="2.3" height="1.5" rx="0.3" fill="#2a6aa8"/><rect x="2.9" y="2.9" width="2.3" height="1.5" rx="0.3" fill="#7cc54a"/><rect x="5.7" y="2.9" width="2.3" height="1.5" rx="0.3" fill="#8fd060"/><path d="M1.1 2.9 V2.3 H6.9 V2.9 M4.1 1.7 V2.9" stroke="#4a86c0" stroke-width="0.45" fill="none"/></svg><div class="t" style="left:28.4px;top:312.80px;font-size:5.45px;color:#111">ОИТ</div></div><div class="t" style="left:237px;top:59.3px;font-size:5.6px;font-weight:bold;color:#1a1a1a">Сотрудники</div><div class="ab" style="left:237px;top:68px;width:339px;height:8.5px;background:#fff;border:1px solid #e2e2e2"></div><div class="t" style="left:238.5px;top:70.6px;font-size:5.0px;color:#8a8a8a">Фильтр по ФИО или табельному номеру</div><svg class="ab" style="left:569px;top:69.5px" width="7" height="6" viewBox="0 0 7 6"><path d="M0.6 2.1 H1.9 L4.2 0.4 V5.6 L1.9 3.9 H0.6Z" fill="#444"/><path d="M5 1.8 Q5.9 3 5 4.2" stroke="#777" stroke-width="0.5" fill="none"/></svg><svg class="ab" style="left:580px;top:69px" width="8" height="7" viewBox="0 0 8 7"><circle cx="5" cy="2.6" r="1.9" stroke="#222" stroke-width="1.1" fill="none"/><path d="M3.7 3.9 L1 6.4" stroke="#222" stroke-width="1.4"/></svg><div class="ab" style="left:236.8px;top:80px;width:352.8px;height:317.5px;background:#fff;border:1px solid #d2d2d2"></div><div class="ab" style="left:237.8px;top:81px;width:351px;height:9.5px;background:linear-gradient(#ffffff,#f3f3f3);border-bottom:1px solid #dcdcdc"></div><div class="ab" style="left:272px;top:81px;width:129px;height:9.5px;background:linear-gradient(#e8f3fb,#d9ebf8);border-left:1px solid #b8d8ef;border-right:1px solid #b8d8ef;border-bottom:1px solid #b8d8ef"></div><div class="ab" style="left:520px;top:81px;width:1px;height:9.5px;background:#e2e2e2"></div><div class="ab" style="left:539px;top:81px;width:1px;height:9.5px;background:#e2e2e2"></div><div class="ab" style="left:557px;top:81px;width:1px;height:9.5px;background:#e2e2e2"></div><div class="ab" style="left:575px;top:81px;width:1px;height:9.5px;background:#e2e2e2"></div><div class="t" style="left:254.5px;top:83.5px;font-size:5.3px;font-weight:bold;color:#1a1a1a;transform:translateX(-50%)">Таб. №</div><div class="t" style="left:336.5px;top:83.5px;font-size:5.3px;font-weight:bold;color:#1a1a1a;transform:translateX(-50%)">ФИО</div><div class="t" style="left:460px;top:83.5px;font-size:5.3px;font-weight:bold;color:#1a1a1a;transform:translateX(-50%)">Должность</div><div class="t" style="left:529.5px;top:83.5px;font-size:5.3px;font-weight:bold;color:#1a1a1a;transform:translateX(-50%)">К</div><div class="t" style="left:548px;top:83.5px;font-size:5.3px;font-weight:bold;color:#1a1a1a;transform:translateX(-50%)">О</div><div class="t" style="left:566px;top:83.5px;font-size:5.3px;font-weight:bold;color:#1a1a1a;transform:translateX(-50%)">П</div><div class="t" style="left:581.5px;top:83.5px;font-size:5.3px;font-weight:bold;color:#1a1a1a;transform:translateX(-50%)">Д</div><svg class="ab" style="left:334.5px;top:80.8px" width="4" height="2" viewBox="0 0 4 2"><path d="M0 2 L2 0 L4 2" stroke="#6a8fb0" stroke-width="0.6" fill="none"/></svg><div class="t" style="left:239px;top:94.30px;font-size:5.3px;color:#111;letter-spacing:-0.15px">14506083</div><svg class="ab" style="left:274.2px;top:93.30px" width="6" height="6" viewBox="0 0 6 6"><path d="M0.2 0.3 H3.6 V5.3 H0.2Z" fill="#86cc5a"/><path d="M0.8 0.6 L2.8 0.6 L1.2 4.2Z" fill="#c4e8ad"/><circle cx="3.9" cy="1.5" r="0.95" fill="#2a6fb0"/><path d="M2.3 5.4 Q2.3 2.6 3.9 2.6 Q5.6 2.6 5.6 5.4Z" fill="#1b5e9b"/></svg><div class="t" style="left:283.3px;top:94.30px;font-size:5.5px;color:#111">Бажов Степан Сергеевич</div><div class="t" style="left:401.5px;top:94.30px;font-size:5.6px;color:#111;max-width:118px;overflow:hidden">Инженер-программист</div><div class="ab" style="left:526.40px;top:93.50px;width:6.2px;height:6.2px;border:0.9px solid #a9a9a9;background:linear-gradient(135deg,#c9c9c9,#e6e6e6 55%,#f6f6f6)"></div><div class="ab" style="left:544.90px;top:93.50px;width:6.2px;height:6.2px;border:0.9px solid #a9a9a9;background:linear-gradient(135deg,#c9c9c9,#e6e6e6 55%,#f6f6f6)"></div><svg class="ab" style="left:546.00px;top:94.40px" width="4.2" height="4.4" viewBox="0 0 4.2 4.4"><path d="M0.5 2.4 L1.7 3.7 L3.8 0.5" stroke="#2b4f8c" stroke-width="0.9" fill="none"/></svg><div class="ab" style="left:562.90px;top:93.50px;width:6.2px;height:6.2px;border:0.9px solid #a9a9a9;background:linear-gradient(135deg,#c9c9c9,#e6e6e6 55%,#f6f6f6)"></div><div class="ab" style="left:237.8px;top:101.89px;width:351px;height:10.58px;background:#f6f6f6"></div><div class="t" style="left:239px;top:104.88px;font-size:5.3px;color:#111;letter-spacing:-0.15px">1507391</div><svg class="ab" style="left:274.2px;top:103.88px" width="6" height="6" viewBox="0 0 6 6"><path d="M0.2 0.3 H3.6 V5.3 H0.2Z" fill="#86cc5a"/><path d="M0.8 0.6 L2.8 0.6 L1.2 4.2Z" fill="#c4e8ad"/><circle cx="3.9" cy="1.5" r="0.95" fill="#2a6fb0"/><path d="M2.3 5.4 Q2.3 2.6 3.9 2.6 Q5.6 2.6 5.6 5.4Z" fill="#1b5e9b"/></svg><div class="t" style="left:283.3px;top:104.88px;font-size:5.5px;color:#111">Берчук Роман Александрович</div><div class="t" style="left:401.5px;top:104.88px;font-size:5.6px;color:#111;max-width:118px;overflow:hidden">Инженер-программист</div><div class="ab" style="left:526.40px;top:104.08px;width:6.2px;height:6.2px;border:0.9px solid #a9a9a9;background:linear-gradient(135deg,#c9c9c9,#e6e6e6 55%,#f6f6f6)"></div><div class="ab" style="left:544.90px;top:104.08px;width:6.2px;height:6.2px;border:0.9px solid #a9a9a9;background:linear-gradient(135deg,#c9c9c9,#e6e6e6 55%,#f6f6f6)"></div><svg class="ab" style="left:546.00px;top:104.98px" width="4.2" height="4.4" viewBox="0 0 4.2 4.4"><path d="M0.5 2.4 L1.7 3.7 L3.8 0.5" stroke="#2b4f8c" stroke-width="0.9" fill="none"/></svg><div class="ab" style="left:562.90px;top:104.08px;width:6.2px;height:6.2px;border:0.9px solid #a9a9a9;background:linear-gradient(135deg,#c9c9c9,#e6e6e6 55%,#f6f6f6)"></div><div class="t" style="left:239px;top:115.46px;font-size:5.3px;color:#111;letter-spacing:-0.15px">8330022</div><svg class="ab" style="left:274.2px;top:114.46px" width="6" height="6" viewBox="0 0 6 6"><path d="M0.2 0.3 H3.6 V5.3 H0.2Z" fill="#86cc5a"/><path d="M0.8 0.6 L2.8 0.6 L1.2 4.2Z" fill="#c4e8ad"/><circle cx="3.9" cy="1.5" r="0.95" fill="#2a6fb0"/><path d="M2.3 5.4 Q2.3 2.6 3.9 2.6 Q5.6 2.6 5.6 5.4Z" fill="#1b5e9b"/></svg><div class="t" style="left:283.3px;top:115.46px;font-size:5.5px;color:#111">Голубкин Егор Михайлович</div><div class="t" style="left:401.5px;top:115.46px;font-size:5.6px;color:#111;max-width:118px;overflow:hidden">Инженер-программист</div><div class="ab" style="left:526.40px;top:114.66px;width:6.2px;height:6.2px;border:0.9px solid #a9a9a9;background:linear-gradient(135deg,#c9c9c9,#e6e6e6 55%,#f6f6f6)"></div><div class="ab" style="left:544.90px;top:114.66px;width:6.2px;height:6.2px;border:0.9px solid #a9a9a9;background:linear-gradient(135deg,#c9c9c9,#e6e6e6 55%,#f6f6f6)"></div><svg class="ab" style="left:546.00px;top:115.56px" width="4.2" height="4.4" viewBox="0 0 4.2 4.4"><path d="M0.5 2.4 L1.7 3.7 L3.8 0.5" stroke="#2b4f8c" stroke-width="0.9" fill="none"/></svg><div class="ab" style="left:562.90px;top:114.66px;width:6.2px;height:6.2px;border:0.9px solid #a9a9a9;background:linear-gradient(135deg,#c9c9c9,#e6e6e6 55%,#f6f6f6)"></div><div class="ab" style="left:237.8px;top:123.05px;width:351px;height:10.58px;background:#f6f6f6"></div><div class="t" style="left:239px;top:126.04px;font-size:5.3px;color:#111;letter-spacing:-0.15px">14506094</div><svg class="ab" style="left:274.2px;top:125.04px" width="6" height="6" viewBox="0 0 6 6"><path d="M0.2 0.3 H3.6 V5.3 H0.2Z" fill="#86cc5a"/><path d="M0.8 0.6 L2.8 0.6 L1.2 4.2Z" fill="#c4e8ad"/><circle cx="3.9" cy="1.5" r="0.95" fill="#2a6fb0"/><path d="M2.3 5.4 Q2.3 2.6 3.9 2.6 Q5.6 2.6 5.6 5.4Z" fill="#1b5e9b"/></svg><div class="t" style="left:283.3px;top:126.04px;font-size:5.5px;color:#111">Дерстуганов Алексей Юрьевич</div><div class="t" style="left:401.5px;top:126.04px;font-size:5.6px;color:#111;max-width:118px;overflow:hidden">Инженер-электронщик</div><div class="ab" style="left:526.40px;top:125.24px;width:6.2px;height:6.2px;border:0.9px solid #a9a9a9;background:linear-gradient(135deg,#c9c9c9,#e6e6e6 55%,#f6f6f6)"></div><div class="ab" style="left:544.90px;top:125.24px;width:6.2px;height:6.2px;border:0.9px solid #a9a9a9;background:linear-gradient(135deg,#c9c9c9,#e6e6e6 55%,#f6f6f6)"></div><svg class="ab" style="left:546.00px;top:126.14px" width="4.2" height="4.4" viewBox="0 0 4.2 4.4"><path d="M0.5 2.4 L1.7 3.7 L3.8 0.5" stroke="#2b4f8c" stroke-width="0.9" fill="none"/></svg><div class="ab" style="left:562.90px;top:125.24px;width:6.2px;height:6.2px;border:0.9px solid #a9a9a9;background:linear-gradient(135deg,#c9c9c9,#e6e6e6 55%,#f6f6f6)"></div><div class="t" style="left:239px;top:136.62px;font-size:5.3px;color:#111;letter-spacing:-0.15px">8329998</div><svg class="ab" style="left:274.2px;top:135.62px" width="6" height="6" viewBox="0 0 6 6"><path d="M0.2 0.3 H3.6 V5.3 H0.2Z" fill="#86cc5a"/><path d="M0.8 0.6 L2.8 0.6 L1.2 4.2Z" fill="#c4e8ad"/><circle cx="3.9" cy="1.5" r="0.95" fill="#2a6fb0"/><path d="M2.3 5.4 Q2.3 2.6 3.9 2.6 Q5.6 2.6 5.6 5.4Z" fill="#1b5e9b"/></svg><div class="t" style="left:283.3px;top:136.62px;font-size:5.5px;color:#111">Дудин Сергей Владимирович</div><div class="t" style="left:401.5px;top:136.62px;font-size:5.6px;color:#111;max-width:118px;overflow:hidden">Инженер технической поддержки</div><div class="ab" style="left:526.40px;top:135.82px;width:6.2px;height:6.2px;border:0.9px solid #a9a9a9;background:linear-gradient(135deg,#c9c9c9,#e6e6e6 55%,#f6f6f6)"></div><div class="ab" style="left:544.90px;top:135.82px;width:6.2px;height:6.2px;border:0.9px solid #a9a9a9;background:linear-gradient(135deg,#c9c9c9,#e6e6e6 55%,#f6f6f6)"></div><svg class="ab" style="left:546.00px;top:136.72px" width="4.2" height="4.4" viewBox="0 0 4.2 4.4"><path d="M0.5 2.4 L1.7 3.7 L3.8 0.5" stroke="#2b4f8c" stroke-width="0.9" fill="none"/></svg><div class="ab" style="left:562.90px;top:135.82px;width:6.2px;height:6.2px;border:0.9px solid #a9a9a9;background:linear-gradient(135deg,#c9c9c9,#e6e6e6 55%,#f6f6f6)"></div><div class="ab" style="left:237.8px;top:144.21px;width:351px;height:10.58px;background:#3399ff"></div><div class="ab" style="left:272.5px;top:144.21px;width:128.5px;height:10.58px;border:0.6px solid #8cc4fa"></div><div class="t" style="left:239px;top:147.20px;font-size:5.3px;color:#fff;letter-spacing:-0.15px">8329987</div><svg class="ab" style="left:274.2px;top:146.20px" width="6" height="6" viewBox="0 0 6 6"><path d="M0.2 0.3 H3.6 V5.3 H0.2Z" fill="#86cc5a"/><path d="M0.8 0.6 L2.8 0.6 L1.2 4.2Z" fill="#c4e8ad"/><circle cx="3.9" cy="1.5" r="0.95" fill="#2a6fb0"/><path d="M2.3 5.4 Q2.3 2.6 3.9 2.6 Q5.6 2.6 5.6 5.4Z" fill="#1b5e9b"/></svg><div class="t" style="left:283.3px;top:147.20px;font-size:5.5px;color:#fff">Задорожна  Марина Николаевна</div><div class="t" style="left:401.5px;top:147.20px;font-size:5.6px;color:#fff;max-width:118px;overflow:hidden">Менеджер по работе с клиентами</div><div class="ab" style="left:526.40px;top:146.40px;width:6.2px;height:6.2px;border:0.9px solid #a9a9a9;background:linear-gradient(135deg,#c9c9c9,#e6e6e6 55%,#f6f6f6)"></div><div class="ab" style="left:544.90px;top:146.40px;width:6.2px;height:6.2px;border:0.9px solid #a9a9a9;background:linear-gradient(135deg,#c9c9c9,#e6e6e6 55%,#f6f6f6)"></div><svg class="ab" style="left:546.00px;top:147.30px" width="4.2" height="4.4" viewBox="0 0 4.2 4.4"><path d="M0.5 2.4 L1.7 3.7 L3.8 0.5" stroke="#2b4f8c" stroke-width="0.9" fill="none"/></svg><div class="ab" style="left:562.90px;top:146.40px;width:6.2px;height:6.2px;border:0.9px solid #a9a9a9;background:linear-gradient(135deg,#c9c9c9,#e6e6e6 55%,#f6f6f6)"></div><div class="t" style="left:239px;top:157.78px;font-size:5.3px;color:#111;letter-spacing:-0.15px">6569806</div><svg class="ab" style="left:274.2px;top:156.78px" width="6" height="6" viewBox="0 0 6 6"><path d="M0.2 0.3 H3.6 V5.3 H0.2Z" fill="#86cc5a"/><path d="M0.8 0.6 L2.8 0.6 L1.2 4.2Z" fill="#c4e8ad"/><circle cx="3.9" cy="1.5" r="0.95" fill="#2a6fb0"/><path d="M2.3 5.4 Q2.3 2.6 3.9 2.6 Q5.6 2.6 5.6 5.4Z" fill="#1b5e9b"/></svg><div class="t" style="left:283.3px;top:157.78px;font-size:5.5px;color:#111">Захаров Виталий Владимирович</div><div class="t" style="left:401.5px;top:157.78px;font-size:5.6px;color:#111;max-width:118px;overflow:hidden">Инженер-программист</div><div class="ab" style="left:526.40px;top:156.98px;width:6.2px;height:6.2px;border:0.9px solid #a9a9a9;background:linear-gradient(135deg,#c9c9c9,#e6e6e6 55%,#f6f6f6)"></div><div class="ab" style="left:544.90px;top:156.98px;width:6.2px;height:6.2px;border:0.9px solid #a9a9a9;background:linear-gradient(135deg,#c9c9c9,#e6e6e6 55%,#f6f6f6)"></div><svg class="ab" style="left:546.00px;top:157.88px" width="4.2" height="4.4" viewBox="0 0 4.2 4.4"><path d="M0.5 2.4 L1.7 3.7 L3.8 0.5" stroke="#2b4f8c" stroke-width="0.9" fill="none"/></svg><div class="ab" style="left:562.90px;top:156.98px;width:6.2px;height:6.2px;border:0.9px solid #a9a9a9;background:linear-gradient(135deg,#c9c9c9,#e6e6e6 55%,#f6f6f6)"></div><div class="ab" style="left:237.8px;top:165.37px;width:351px;height:10.58px;background:#f6f6f6"></div><div class="t" style="left:239px;top:168.36px;font-size:5.3px;color:#111;letter-spacing:-0.15px">8401166</div><svg class="ab" style="left:274.2px;top:167.36px" width="6" height="6" viewBox="0 0 6 6"><path d="M0.2 0.3 H3.6 V5.3 H0.2Z" fill="#86cc5a"/><path d="M0.8 0.6 L2.8 0.6 L1.2 4.2Z" fill="#c4e8ad"/><circle cx="3.9" cy="1.5" r="0.95" fill="#2a6fb0"/><path d="M2.3 5.4 Q2.3 2.6 3.9 2.6 Q5.6 2.6 5.6 5.4Z" fill="#1b5e9b"/></svg><div class="t" style="left:283.3px;top:168.36px;font-size:5.5px;color:#111">Захаров Константин Иванович</div><div class="t" style="left:401.5px;top:168.36px;font-size:5.6px;color:#111;max-width:118px;overflow:hidden">Инженер-программист</div><div class="ab" style="left:526.40px;top:167.56px;width:6.2px;height:6.2px;border:0.9px solid #a9a9a9;background:linear-gradient(135deg,#c9c9c9,#e6e6e6 55%,#f6f6f6)"></div><div class="ab" style="left:544.90px;top:167.56px;width:6.2px;height:6.2px;border:0.9px solid #a9a9a9;background:linear-gradient(135deg,#c9c9c9,#e6e6e6 55%,#f6f6f6)"></div><svg class="ab" style="left:546.00px;top:168.46px" width="4.2" height="4.4" viewBox="0 0 4.2 4.4"><path d="M0.5 2.4 L1.7 3.7 L3.8 0.5" stroke="#2b4f8c" stroke-width="0.9" fill="none"/></svg><div class="ab" style="left:562.90px;top:167.56px;width:6.2px;height:6.2px;border:0.9px solid #a9a9a9;background:linear-gradient(135deg,#c9c9c9,#e6e6e6 55%,#f6f6f6)"></div><div class="t" style="left:239px;top:178.94px;font-size:5.3px;color:#111;letter-spacing:-0.15px">14419988</div><svg class="ab" style="left:274.2px;top:177.94px" width="6" height="6" viewBox="0 0 6 6"><path d="M0.2 0.3 H3.6 V5.3 H0.2Z" fill="#86cc5a"/><path d="M0.8 0.6 L2.8 0.6 L1.2 4.2Z" fill="#c4e8ad"/><circle cx="3.9" cy="1.5" r="0.95" fill="#2a6fb0"/><path d="M2.3 5.4 Q2.3 2.6 3.9 2.6 Q5.6 2.6 5.6 5.4Z" fill="#1b5e9b"/></svg><div class="t" style="left:283.3px;top:178.94px;font-size:5.5px;color:#111">Калабурдин Николай Викторович</div><div class="t" style="left:401.5px;top:178.94px;font-size:5.6px;color:#111;max-width:118px;overflow:hidden">техник</div><div class="ab" style="left:526.40px;top:178.14px;width:6.2px;height:6.2px;border:0.9px solid #a9a9a9;background:linear-gradient(135deg,#c9c9c9,#e6e6e6 55%,#f6f6f6)"></div><div class="ab" style="left:544.90px;top:178.14px;width:6.2px;height:6.2px;border:0.9px solid #a9a9a9;background:linear-gradient(135deg,#c9c9c9,#e6e6e6 55%,#f6f6f6)"></div><svg class="ab" style="left:546.00px;top:179.04px" width="4.2" height="4.4" viewBox="0 0 4.2 4.4"><path d="M0.5 2.4 L1.7 3.7 L3.8 0.5" stroke="#2b4f8c" stroke-width="0.9" fill="none"/></svg><div class="ab" style="left:562.90px;top:178.14px;width:6.2px;height:6.2px;border:0.9px solid #a9a9a9;background:linear-gradient(135deg,#c9c9c9,#e6e6e6 55%,#f6f6f6)"></div><div class="ab" style="left:237.8px;top:186.53px;width:351px;height:10.58px;background:#f6f6f6"></div><div class="t" style="left:239px;top:189.52px;font-size:5.3px;color:#111;letter-spacing:-0.15px">14420001</div><svg class="ab" style="left:274.2px;top:188.52px" width="6" height="6" viewBox="0 0 6 6"><path d="M0.2 0.3 H3.6 V5.3 H0.2Z" fill="#86cc5a"/><path d="M0.8 0.6 L2.8 0.6 L1.2 4.2Z" fill="#c4e8ad"/><circle cx="3.9" cy="1.5" r="0.95" fill="#2a6fb0"/><path d="M2.3 5.4 Q2.3 2.6 3.9 2.6 Q5.6 2.6 5.6 5.4Z" fill="#1b5e9b"/></svg><div class="t" style="left:283.3px;top:189.52px;font-size:5.5px;color:#111">Конакова Татьяна Сергеевна</div><div class="t" style="left:401.5px;top:189.52px;font-size:5.6px;color:#111;max-width:118px;overflow:hidden">менеджер проекта</div><div class="ab" style="left:526.40px;top:188.72px;width:6.2px;height:6.2px;border:0.9px solid #a9a9a9;background:linear-gradient(135deg,#c9c9c9,#e6e6e6 55%,#f6f6f6)"></div><div class="ab" style="left:544.90px;top:188.72px;width:6.2px;height:6.2px;border:0.9px solid #a9a9a9;background:linear-gradient(135deg,#c9c9c9,#e6e6e6 55%,#f6f6f6)"></div><svg class="ab" style="left:546.00px;top:189.62px" width="4.2" height="4.4" viewBox="0 0 4.2 4.4"><path d="M0.5 2.4 L1.7 3.7 L3.8 0.5" stroke="#2b4f8c" stroke-width="0.9" fill="none"/></svg><div class="ab" style="left:562.90px;top:188.72px;width:6.2px;height:6.2px;border:0.9px solid #a9a9a9;background:linear-gradient(135deg,#c9c9c9,#e6e6e6 55%,#f6f6f6)"></div><div class="t" style="left:239px;top:200.10px;font-size:5.3px;color:#111;letter-spacing:-0.15px">15541412</div><svg class="ab" style="left:274.2px;top:199.10px" width="6" height="6" viewBox="0 0 6 6"><path d="M0.2 0.3 H3.6 V5.3 H0.2Z" fill="#86cc5a"/><path d="M0.8 0.6 L2.8 0.6 L1.2 4.2Z" fill="#c4e8ad"/><circle cx="3.9" cy="1.5" r="0.95" fill="#2a6fb0"/><path d="M2.3 5.4 Q2.3 2.6 3.9 2.6 Q5.6 2.6 5.6 5.4Z" fill="#1b5e9b"/></svg><div class="t" style="left:283.3px;top:200.10px;font-size:5.5px;color:#5a5a5a">Лопухов Алексей Владимирович</div><div class="t" style="left:401.5px;top:200.10px;font-size:5.6px;color:#5a5a5a;max-width:118px;overflow:hidden">Техник</div><div class="ab" style="left:526.40px;top:199.30px;width:6.2px;height:6.2px;border:0.9px solid #a9a9a9;background:linear-gradient(135deg,#c9c9c9,#e6e6e6 55%,#f6f6f6)"></div><div class="ab" style="left:544.90px;top:199.30px;width:6.2px;height:6.2px;border:0.9px solid #a9a9a9;background:linear-gradient(135deg,#c9c9c9,#e6e6e6 55%,#f6f6f6)"></div><svg class="ab" style="left:546.00px;top:200.20px" width="4.2" height="4.4" viewBox="0 0 4.2 4.4"><path d="M0.5 2.4 L1.7 3.7 L3.8 0.5" stroke="#2b4f8c" stroke-width="0.9" fill="none"/></svg><div class="ab" style="left:562.90px;top:199.30px;width:6.2px;height:6.2px;border:0.9px solid #a9a9a9;background:linear-gradient(135deg,#c9c9c9,#e6e6e6 55%,#f6f6f6)"></div><div class="ab" style="left:237.8px;top:207.69px;width:351px;height:10.58px;background:#f6f6f6"></div><div class="t" style="left:239px;top:210.68px;font-size:5.3px;color:#111;letter-spacing:-0.15px">14419994</div><svg class="ab" style="left:274.2px;top:209.68px" width="6" height="6" viewBox="0 0 6 6"><path d="M0.2 0.3 H3.6 V5.3 H0.2Z" fill="#86cc5a"/><path d="M0.8 0.6 L2.8 0.6 L1.2 4.2Z" fill="#c4e8ad"/><circle cx="3.9" cy="1.5" r="0.95" fill="#2a6fb0"/><path d="M2.3 5.4 Q2.3 2.6 3.9 2.6 Q5.6 2.6 5.6 5.4Z" fill="#1b5e9b"/></svg><div class="t" style="left:283.3px;top:210.68px;font-size:5.5px;color:#5a5a5a">Магасумов Андрей Анатольевич</div><div class="t" style="left:401.5px;top:210.68px;font-size:5.6px;color:#5a5a5a;max-width:118px;overflow:hidden">Менеджер по продажам</div><div class="ab" style="left:526.40px;top:209.88px;width:6.2px;height:6.2px;border:0.9px solid #a9a9a9;background:linear-gradient(135deg,#c9c9c9,#e6e6e6 55%,#f6f6f6)"></div><div class="ab" style="left:544.90px;top:209.88px;width:6.2px;height:6.2px;border:0.9px solid #a9a9a9;background:linear-gradient(135deg,#c9c9c9,#e6e6e6 55%,#f6f6f6)"></div><svg class="ab" style="left:546.00px;top:210.78px" width="4.2" height="4.4" viewBox="0 0 4.2 4.4"><path d="M0.5 2.4 L1.7 3.7 L3.8 0.5" stroke="#2b4f8c" stroke-width="0.9" fill="none"/></svg><div class="ab" style="left:562.90px;top:209.88px;width:6.2px;height:6.2px;border:0.9px solid #a9a9a9;background:linear-gradient(135deg,#c9c9c9,#e6e6e6 55%,#f6f6f6)"></div><div class="t" style="left:239px;top:221.26px;font-size:5.3px;color:#111;letter-spacing:-0.15px">6569821</div><svg class="ab" style="left:274.2px;top:220.26px" width="6" height="6" viewBox="0 0 6 6"><path d="M0.2 0.3 H3.6 V5.3 H0.2Z" fill="#86cc5a"/><path d="M0.8 0.6 L2.8 0.6 L1.2 4.2Z" fill="#c4e8ad"/><circle cx="3.9" cy="1.5" r="0.95" fill="#2a6fb0"/><path d="M2.3 5.4 Q2.3 2.6 3.9 2.6 Q5.6 2.6 5.6 5.4Z" fill="#1b5e9b"/></svg><div class="t" style="left:283.3px;top:221.26px;font-size:5.5px;color:#111">Маркелов Станислав Анатольевич</div><div class="t" style="left:401.5px;top:221.26px;font-size:5.6px;color:#111;max-width:118px;overflow:hidden">инженер-программист</div><div class="ab" style="left:526.40px;top:220.46px;width:6.2px;height:6.2px;border:0.9px solid #a9a9a9;background:linear-gradient(135deg,#c9c9c9,#e6e6e6 55%,#f6f6f6)"></div><div class="ab" style="left:544.90px;top:220.46px;width:6.2px;height:6.2px;border:0.9px solid #a9a9a9;background:linear-gradient(135deg,#c9c9c9,#e6e6e6 55%,#f6f6f6)"></div><svg class="ab" style="left:546.00px;top:221.36px" width="4.2" height="4.4" viewBox="0 0 4.2 4.4"><path d="M0.5 2.4 L1.7 3.7 L3.8 0.5" stroke="#2b4f8c" stroke-width="0.9" fill="none"/></svg><div class="ab" style="left:562.90px;top:220.46px;width:6.2px;height:6.2px;border:0.9px solid #a9a9a9;background:linear-gradient(135deg,#c9c9c9,#e6e6e6 55%,#f6f6f6)"></div><div class="ab" style="left:237.8px;top:228.85px;width:351px;height:10.58px;background:#f6f6f6"></div><div class="t" style="left:239px;top:231.84px;font-size:5.3px;color:#111;letter-spacing:-0.15px">14492696</div><svg class="ab" style="left:274.2px;top:230.84px" width="6" height="6" viewBox="0 0 6 6"><path d="M0.2 0.3 H3.6 V5.3 H0.2Z" fill="#86cc5a"/><path d="M0.8 0.6 L2.8 0.6 L1.2 4.2Z" fill="#c4e8ad"/><circle cx="3.9" cy="1.5" r="0.95" fill="#2a6fb0"/><path d="M2.3 5.4 Q2.3 2.6 3.9 2.6 Q5.6 2.6 5.6 5.4Z" fill="#1b5e9b"/></svg><div class="t" style="left:283.3px;top:231.84px;font-size:5.5px;color:#111">Маслаков Алексей Васильевич</div><div class="t" style="left:401.5px;top:231.84px;font-size:5.6px;color:#111;max-width:118px;overflow:hidden">Инженер-электронщик</div><div class="ab" style="left:526.40px;top:231.04px;width:6.2px;height:6.2px;border:0.9px solid #a9a9a9;background:linear-gradient(135deg,#c9c9c9,#e6e6e6 55%,#f6f6f6)"></div><div class="ab" style="left:544.90px;top:231.04px;width:6.2px;height:6.2px;border:0.9px solid #a9a9a9;background:linear-gradient(135deg,#c9c9c9,#e6e6e6 55%,#f6f6f6)"></div><svg class="ab" style="left:546.00px;top:231.94px" width="4.2" height="4.4" viewBox="0 0 4.2 4.4"><path d="M0.5 2.4 L1.7 3.7 L3.8 0.5" stroke="#2b4f8c" stroke-width="0.9" fill="none"/></svg><div class="ab" style="left:562.90px;top:231.04px;width:6.2px;height:6.2px;border:0.9px solid #a9a9a9;background:linear-gradient(135deg,#c9c9c9,#e6e6e6 55%,#f6f6f6)"></div><div class="t" style="left:239px;top:242.42px;font-size:5.3px;color:#111;letter-spacing:-0.15px">8330021</div><svg class="ab" style="left:274.2px;top:241.42px" width="6" height="6" viewBox="0 0 6 6"><path d="M0.2 0.3 H3.6 V5.3 H0.2Z" fill="#86cc5a"/><path d="M0.8 0.6 L2.8 0.6 L1.2 4.2Z" fill="#c4e8ad"/><circle cx="3.9" cy="1.5" r="0.95" fill="#2a6fb0"/><path d="M2.3 5.4 Q2.3 2.6 3.9 2.6 Q5.6 2.6 5.6 5.4Z" fill="#1b5e9b"/></svg><div class="t" style="left:283.3px;top:242.42px;font-size:5.5px;color:#111">Мелкозеров Александр Сергеевич</div><div class="t" style="left:401.5px;top:242.42px;font-size:5.6px;color:#111;max-width:118px;overflow:hidden">Инженер-программист</div><div class="ab" style="left:526.40px;top:241.62px;width:6.2px;height:6.2px;border:0.9px solid #a9a9a9;background:linear-gradient(135deg,#c9c9c9,#e6e6e6 55%,#f6f6f6)"></div><div class="ab" style="left:544.90px;top:241.62px;width:6.2px;height:6.2px;border:0.9px solid #a9a9a9;background:linear-gradient(135deg,#c9c9c9,#e6e6e6 55%,#f6f6f6)"></div><svg class="ab" style="left:546.00px;top:242.52px" width="4.2" height="4.4" viewBox="0 0 4.2 4.4"><path d="M0.5 2.4 L1.7 3.7 L3.8 0.5" stroke="#2b4f8c" stroke-width="0.9" fill="none"/></svg><div class="ab" style="left:562.90px;top:241.62px;width:6.2px;height:6.2px;border:0.9px solid #a9a9a9;background:linear-gradient(135deg,#c9c9c9,#e6e6e6 55%,#f6f6f6)"></div><div class="ab" style="left:237.8px;top:250.01px;width:351px;height:10.58px;background:#f6f6f6"></div><div class="t" style="left:239px;top:253.00px;font-size:5.3px;color:#111;letter-spacing:-0.15px">14492658</div><svg class="ab" style="left:274.2px;top:252.00px" width="6" height="6" viewBox="0 0 6 6"><path d="M0.2 0.3 H3.6 V5.3 H0.2Z" fill="#86cc5a"/><path d="M0.8 0.6 L2.8 0.6 L1.2 4.2Z" fill="#c4e8ad"/><circle cx="3.9" cy="1.5" r="0.95" fill="#2a6fb0"/><path d="M2.3 5.4 Q2.3 2.6 3.9 2.6 Q5.6 2.6 5.6 5.4Z" fill="#1b5e9b"/></svg><div class="t" style="left:283.3px;top:253.00px;font-size:5.5px;color:#111">Прохошев Павел Михайлович</div><div class="t" style="left:401.5px;top:253.00px;font-size:5.6px;color:#111;max-width:118px;overflow:hidden">Инженер</div><div class="ab" style="left:526.40px;top:252.20px;width:6.2px;height:6.2px;border:0.9px solid #a9a9a9;background:linear-gradient(135deg,#c9c9c9,#e6e6e6 55%,#f6f6f6)"></div><div class="ab" style="left:544.90px;top:252.20px;width:6.2px;height:6.2px;border:0.9px solid #a9a9a9;background:linear-gradient(135deg,#c9c9c9,#e6e6e6 55%,#f6f6f6)"></div><svg class="ab" style="left:546.00px;top:253.10px" width="4.2" height="4.4" viewBox="0 0 4.2 4.4"><path d="M0.5 2.4 L1.7 3.7 L3.8 0.5" stroke="#2b4f8c" stroke-width="0.9" fill="none"/></svg><div class="ab" style="left:562.90px;top:252.20px;width:6.2px;height:6.2px;border:0.9px solid #a9a9a9;background:linear-gradient(135deg,#c9c9c9,#e6e6e6 55%,#f6f6f6)"></div><div class="t" style="left:239px;top:263.58px;font-size:5.3px;color:#111;letter-spacing:-0.15px">6569837</div><svg class="ab" style="left:274.2px;top:262.58px" width="6" height="6" viewBox="0 0 6 6"><path d="M0.2 0.3 H3.6 V5.3 H0.2Z" fill="#86cc5a"/><path d="M0.8 0.6 L2.8 0.6 L1.2 4.2Z" fill="#c4e8ad"/><circle cx="3.9" cy="1.5" r="0.95" fill="#2a6fb0"/><path d="M2.3 5.4 Q2.3 2.6 3.9 2.6 Q5.6 2.6 5.6 5.4Z" fill="#1b5e9b"/></svg><div class="t" style="left:283.3px;top:263.58px;font-size:5.5px;color:#111">Рыбина Наталья Алексеевна</div><div class="t" style="left:401.5px;top:263.58px;font-size:5.6px;color:#111;max-width:118px;overflow:hidden">инженер-программист</div><div class="ab" style="left:526.40px;top:262.78px;width:6.2px;height:6.2px;border:0.9px solid #a9a9a9;background:linear-gradient(135deg,#c9c9c9,#e6e6e6 55%,#f6f6f6)"></div><div class="ab" style="left:544.90px;top:262.78px;width:6.2px;height:6.2px;border:0.9px solid #a9a9a9;background:linear-gradient(135deg,#c9c9c9,#e6e6e6 55%,#f6f6f6)"></div><svg class="ab" style="left:546.00px;top:263.68px" width="4.2" height="4.4" viewBox="0 0 4.2 4.4"><path d="M0.5 2.4 L1.7 3.7 L3.8 0.5" stroke="#2b4f8c" stroke-width="0.9" fill="none"/></svg><div class="ab" style="left:562.90px;top:262.78px;width:6.2px;height:6.2px;border:0.9px solid #a9a9a9;background:linear-gradient(135deg,#c9c9c9,#e6e6e6 55%,#f6f6f6)"></div><div class="ab" style="left:237.8px;top:271.17px;width:351px;height:10.58px;background:#f6f6f6"></div><div class="t" style="left:239px;top:274.16px;font-size:5.3px;color:#111;letter-spacing:-0.15px">14419998</div><svg class="ab" style="left:274.2px;top:273.16px" width="6" height="6" viewBox="0 0 6 6"><path d="M0.2 0.3 H3.6 V5.3 H0.2Z" fill="#86cc5a"/><path d="M0.8 0.6 L2.8 0.6 L1.2 4.2Z" fill="#c4e8ad"/><circle cx="3.9" cy="1.5" r="0.95" fill="#2a6fb0"/><path d="M2.3 5.4 Q2.3 2.6 3.9 2.6 Q5.6 2.6 5.6 5.4Z" fill="#1b5e9b"/></svg><div class="t" style="left:283.3px;top:274.16px;font-size:5.5px;color:#111">Федоров Михаил Дмитриевич</div><div class="t" style="left:401.5px;top:274.16px;font-size:5.6px;color:#111;max-width:118px;overflow:hidden">Инженер по сопровождению производства</div><div class="ab" style="left:526.40px;top:273.36px;width:6.2px;height:6.2px;border:0.9px solid #a9a9a9;background:linear-gradient(135deg,#c9c9c9,#e6e6e6 55%,#f6f6f6)"></div><div class="ab" style="left:544.90px;top:273.36px;width:6.2px;height:6.2px;border:0.9px solid #a9a9a9;background:linear-gradient(135deg,#c9c9c9,#e6e6e6 55%,#f6f6f6)"></div><svg class="ab" style="left:546.00px;top:274.26px" width="4.2" height="4.4" viewBox="0 0 4.2 4.4"><path d="M0.5 2.4 L1.7 3.7 L3.8 0.5" stroke="#2b4f8c" stroke-width="0.9" fill="none"/></svg><div class="ab" style="left:562.90px;top:273.36px;width:6.2px;height:6.2px;border:0.9px solid #a9a9a9;background:linear-gradient(135deg,#c9c9c9,#e6e6e6 55%,#f6f6f6)"></div><div class="t" style="left:239px;top:284.74px;font-size:5.3px;color:#111;letter-spacing:-0.15px">14419997</div><svg class="ab" style="left:274.2px;top:283.74px" width="6" height="6" viewBox="0 0 6 6"><path d="M0.2 0.3 H3.6 V5.3 H0.2Z" fill="#86cc5a"/><path d="M0.8 0.6 L2.8 0.6 L1.2 4.2Z" fill="#c4e8ad"/><circle cx="3.9" cy="1.5" r="0.95" fill="#2a6fb0"/><path d="M2.3 5.4 Q2.3 2.6 3.9 2.6 Q5.6 2.6 5.6 5.4Z" fill="#1b5e9b"/></svg><div class="t" style="left:283.3px;top:284.74px;font-size:5.5px;color:#111">Шутов Борис Олегович</div><div class="t" style="left:401.5px;top:284.74px;font-size:5.6px;color:#111;max-width:118px;overflow:hidden">Инженер-тестировщик</div><div class="ab" style="left:526.40px;top:283.94px;width:6.2px;height:6.2px;border:0.9px solid #a9a9a9;background:linear-gradient(135deg,#c9c9c9,#e6e6e6 55%,#f6f6f6)"></div><div class="ab" style="left:544.90px;top:283.94px;width:6.2px;height:6.2px;border:0.9px solid #a9a9a9;background:linear-gradient(135deg,#c9c9c9,#e6e6e6 55%,#f6f6f6)"></div><svg class="ab" style="left:546.00px;top:284.84px" width="4.2" height="4.4" viewBox="0 0 4.2 4.4"><path d="M0.5 2.4 L1.7 3.7 L3.8 0.5" stroke="#2b4f8c" stroke-width="0.9" fill="none"/></svg><div class="ab" style="left:562.90px;top:283.94px;width:6.2px;height:6.2px;border:0.9px solid #a9a9a9;background:linear-gradient(135deg,#c9c9c9,#e6e6e6 55%,#f6f6f6)"></div><div class="ab" style="left:591px;top:68px;width:139.3px;height:329.5px;background:#fff"></div><div class="ab" style="left:591.8px;top:58.7px;width:138px;height:9.5px;background:linear-gradient(#3c8ac4 0,#1f6fae 1.5px,#0e5a96 100%);border-radius:2.5px 2.5px 0 0"></div><div class="t" style="left:597px;top:61.5px;font-size:5.6px;font-weight:bold;color:#fff">Свойства</div><svg class="ab" style="left:720px;top:62px" width="5" height="4" viewBox="0 0 5 4"><path d="M0.3 0.5 H4.7 L2.5 3.5Z" fill="#111"/></svg><svg class="ab" style="left:598px;top:72.6px" width="50.8" height="68.2" viewBox="0 0 50.8 68.2">
<defs><linearGradient id="pbg" x1="0" y1="0" x2="1" y2="0"><stop offset="0" stop-color="#cfc5b3"/><stop offset="0.12" stop-color="#ddd5c6"/><stop offset="0.55" stop-color="#cdbfa5"/><stop offset="1" stop-color="#bba98b"/></linearGradient>
<radialGradient id="pface" cx="0.45" cy="0.4" r="0.7"><stop offset="0" stop-color="#d19b70"/><stop offset="0.7" stop-color="#bb8058"/><stop offset="1" stop-color="#a26a4a"/></radialGradient>
<linearGradient id="phair" x1="0" y1="0" x2="0" y2="1"><stop offset="0" stop-color="#74492f"/><stop offset="1" stop-color="#4e3022"/></linearGradient></defs>
<rect width="50.8" height="68.2" fill="url(#pbg)"/>
<path d="M0 68.2 V61 Q4 55 14 52.5 L18 51.5 H33 L38 52.5 Q47 55 50.8 61 V68.2Z" fill="#bf8767"/>
<path d="M17.5 43 L17 53 Q25 59 33.5 53 L33 43Z" fill="#ad7456"/>
<path d="M7.5 32 Q7 15 17 10 Q26 6.5 35 10.5 Q44 15.5 43.5 31 Q43.5 41 39.5 47.5 L36.5 47.5 Q38.5 38 37.5 31 L14.5 31 Q13 38 15.5 47.5 L12 47.5 Q7.5 41 7.5 32Z" fill="url(#phair)"/>
<path d="M13.8 30 Q14 23 19.5 22 Q26 21 32.5 22 Q38.5 24 38.8 31 Q39 41.5 33 46.5 Q26 50 19 46.5 Q13.5 41.5 13.8 30Z" fill="url(#pface)"/>
<path d="M12.5 31 Q13 15 24 12.5 Q36 11.5 40 27 Q38 23 34 23.5 Q29 20 23 21 Q17 22 14.5 27 Z" fill="#603b27"/>
<path d="M20 22 Q23 17 30 16.5 M26 21.5 Q30 18 35 19" stroke="#8e5f40" stroke-width="0.7" fill="none"/>
<ellipse cx="20.8" cy="30.2" rx="1.9" ry="0.8" fill="#5e4236"/><ellipse cx="31.2" cy="30.2" rx="1.9" ry="0.8" fill="#5e4236"/>
<path d="M19 28.3 Q21 27.5 23 28.3 M29 28.3 Q31 27.5 33 28.3" stroke="#7a5038" stroke-width="0.5" fill="none"/>
<path d="M24.2 36 Q25.8 37.6 27.6 36" stroke="#946246" stroke-width="0.6" fill="none"/>
<path d="M22 41.8 Q26 42.8 30 41.8" stroke="#8a4c3a" stroke-width="0.9" fill="none"/>
<path d="M16.5 50 L23 66 L27 68.2 L31 66 L38 50 L35 51 L28.5 62 L25.5 62 L19.5 51Z" fill="#8f969c" opacity="0.8"/><path d="M20 55 L24 63 M34 55 L30 63" stroke="#6d7a88" stroke-width="0.8" opacity="0.7"/>
<circle cx="27" cy="65.5" r="2" fill="#d89a5a"/>
</svg><div class="t" style="left:653.7px;top:74.00px;font-size:5.4px;font-weight:bold;color:#111">Задорожна</div><div class="t" style="left:653.7px;top:82.75px;font-size:5.4px;font-weight:bold;color:#111">Марина</div><div class="t" style="left:653.7px;top:91.50px;font-size:5.4px;font-weight:bold;color:#111">Николаевна</div><div class="ab" style="left:590.5px;top:390px;width:139.8px;height:7.5px;background:#f0f0f0"></div><div class="ab" style="left:600px;top:390.5px;width:114px;height:6.5px;background:linear-gradient(#f2f2f2,#d9d9d9);border:1px solid #b4b4b4;border-radius:1.5px"></div><div class="ab" style="left:655px;top:392.3px;width:3.5px;height:3px;background:repeating-linear-gradient(90deg,#8a8a8a 0 0.6px,transparent 0.6px 1.2px)"></div><svg class="ab" style="left:594px;top:391.5px" width="3" height="4" viewBox="0 0 3 4"><path d="M2.5 0 V4 L0.3 2Z" fill="#444"/></svg><svg class="ab" style="left:725px;top:391.5px" width="3" height="4" viewBox="0 0 3 4"><path d="M0.5 0 V4 L2.7 2Z" fill="#444"/></svg><div class="ab" style="left:19px;top:397.5px;width:713px;height:9.5px;background:#f0f0f0;border-top:1px solid #dadada"></div><svg class="ab" style="left:726px;top:401px" width="5" height="5" viewBox="0 0 5 5"><path d="M4 1 L1 4 M4 2.5 L2.5 4" stroke="#b8b8b8" stroke-width="0.6"/></svg></body></html>
